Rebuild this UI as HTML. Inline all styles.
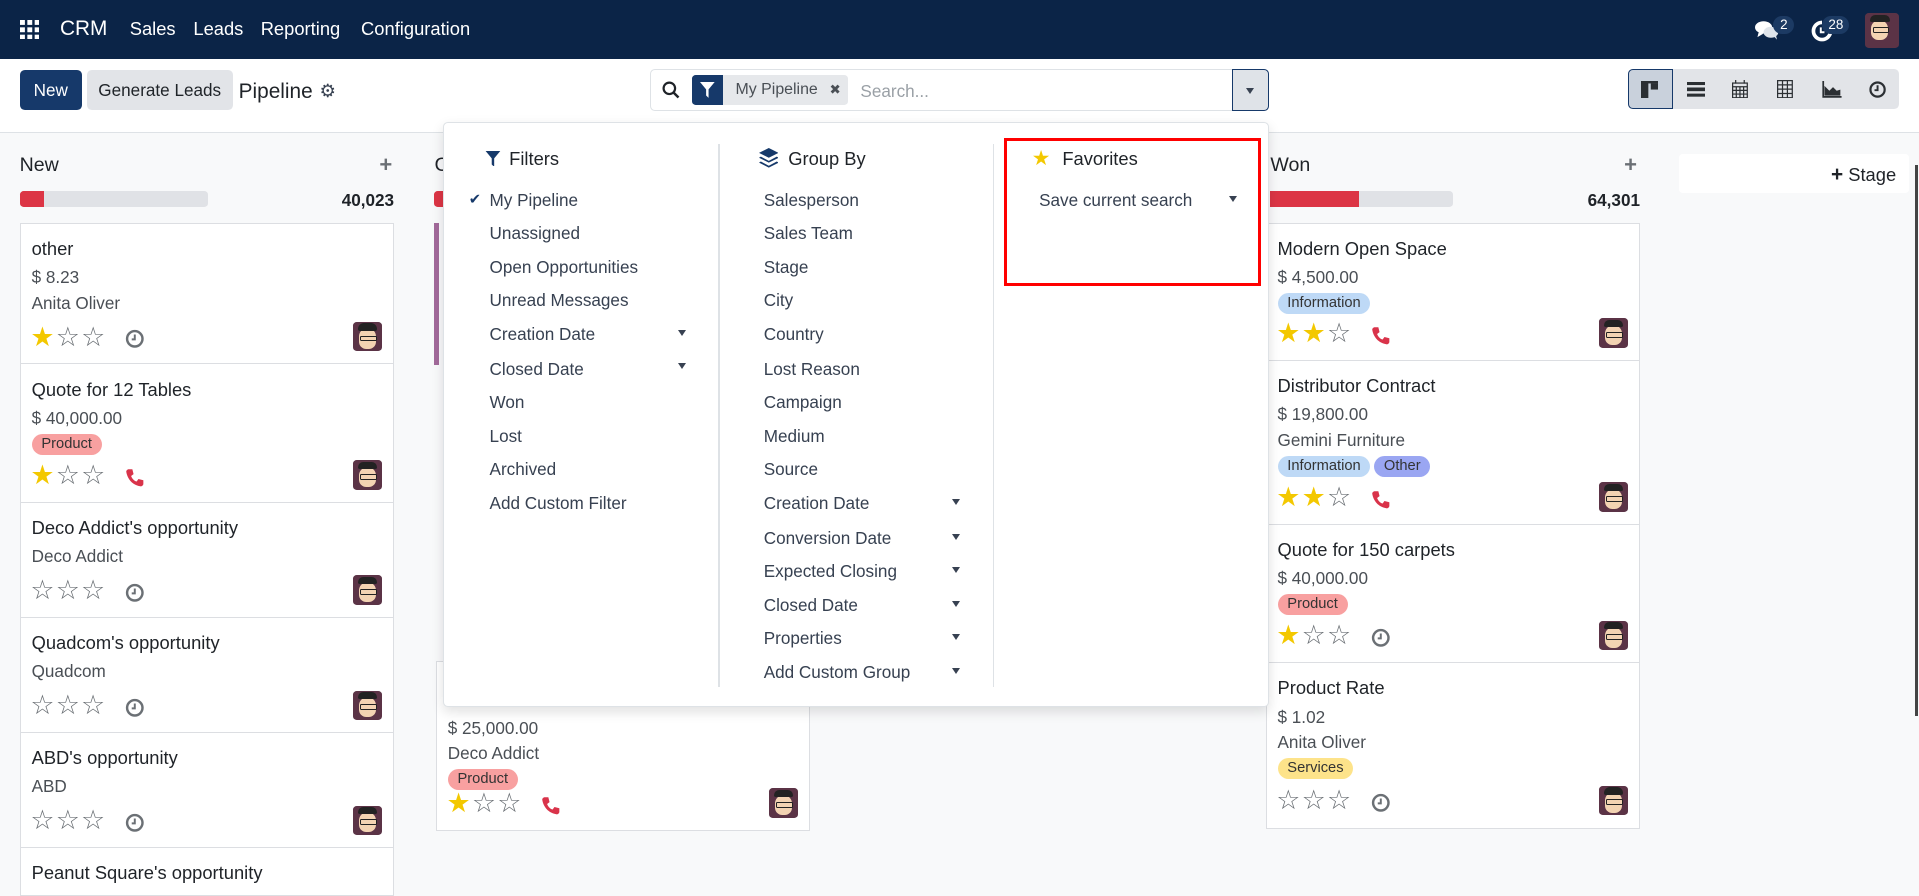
<!DOCTYPE html>
<html><head><meta charset="utf-8">
<style>
html,body{margin:0;padding:0;}
body{width:1568px;height:714px;overflow:hidden;zoom:1.2239;background:#f8f9fa;font-family:"Liberation Sans","DejaVu Sans",sans-serif;color:#374151;position:relative;}
.a{position:absolute;}
.nav{left:0;top:0;width:1568px;height:48px;background:#0b2447;color:#fff;}
.nav span{position:absolute;top:15px;font-size:15px;}
.ctrl{left:0;top:48px;width:1568px;height:60px;background:#fff;border-bottom:1px solid #dee2e6;}
.btn{position:absolute;top:9px;height:33px;line-height:33px;font-size:14px;border-radius:4px;text-align:center;}
.card{position:absolute;background:#fff;border:1px solid #dcdee2;box-sizing:border-box;padding:10px 9px;font-size:14px;color:#4a4f55;}
.card .t{font-size:15px;color:#1f2328;line-height:21px;margin-bottom:3px;}
.card .l{line-height:21px;}
.tag{display:inline-block;height:17px;line-height:17px;padding:0 8px;border-radius:9px;font-size:12px;color:#333;margin-top:1px;margin-right:3px;}
.p{background:#f8a0a0;}.i{background:#bed9f6;}.o{background:#9aa6f2;}.s{background:#fde38a;}
.foot{position:absolute;left:9px;bottom:8px;height:22px;right:9px;}
.st{font-family:"DejaVu Sans",sans-serif;font-size:22px;line-height:22px;color:#6b7075;letter-spacing:1px;position:absolute;left:-1px;top:-2px;}
.st b{color:#f3c800;font-weight:normal;}
.av{position:absolute;right:0;top:-4px;width:24px;height:24px;border-radius:3px;background:#5b3346;overflow:hidden;}
.av:before{content:"";position:absolute;left:5px;top:5px;width:14px;height:17px;border-radius:7px 7px 6px 6px;background:#f3d3b2;}
.av:after{content:"";position:absolute;left:4px;top:1px;width:16px;height:6px;border-radius:6px 6px 2px 2px;background:#222;}
.av i{position:absolute;left:6px;top:11px;width:12px;height:3px;border:1px solid #222;border-radius:1px;z-index:2;}
.ico{position:absolute;top:2px;}
.menu{font-size:14px;color:#374151;white-space:nowrap;}
.menu div{position:absolute;white-space:nowrap;}
.hdr{font-size:15px;color:#1f2328;}
.caret{position:absolute;width:0;height:0;border-left:4px solid transparent;border-right:4px solid transparent;border-top:5px solid #374151;}
</style></head><body>

<div class="a nav">
  <svg class="a" style="left:16px;top:16px" width="16" height="16" viewBox="0 0 16 16" fill="#fff"><rect x="0" y="0" width="4" height="4"/><rect x="6" y="0" width="4" height="4"/><rect x="12" y="0" width="4" height="4"/><rect x="0" y="6" width="4" height="4"/><rect x="6" y="6" width="4" height="4"/><rect x="12" y="6" width="4" height="4"/><rect x="0" y="12" width="4" height="4"/><rect x="6" y="12" width="4" height="4"/><rect x="12" y="12" width="4" height="4"/></svg>
  <span style="left:49px;top:14px;font-size:17px">CRM</span>
  <span style="left:106px">Sales</span>
  <span style="left:158px">Leads</span>
  <span style="left:213px">Reporting</span>
  <span style="left:295px">Configuration</span>
  <svg class="a" style="left:1434px;top:16px" width="20" height="17" viewBox="0 0 20 17" fill="#fff"><ellipse cx="7" cy="6" rx="7" ry="5"/><path d="M3 10 L2 14 L7 11Z"/><ellipse cx="13" cy="10" rx="6" ry="4.5" fill="#dfe4ea"/><path d="M15 13 L18 16 L17 12Z" fill="#dfe4ea"/></svg>
  <div class="a" style="left:1449px;top:13px;width:17px;height:15px;border-radius:8px;background:#1c3a63;font-size:11px;text-align:center;line-height:15px">2</div>
  <svg class="a" style="left:1480px;top:16px" width="18" height="18" viewBox="0 0 18 18"><path d="M9 2 A7 7 0 1 0 16 9" stroke="#fff" stroke-width="3" fill="none"/><path d="M8 6 V10 H11" stroke="#fff" stroke-width="1.6" fill="none"/></svg>
  <div class="a" style="left:1489px;top:13px;width:22px;height:15px;border-radius:8px;background:#1c3a63;font-size:11px;text-align:center;line-height:15px">28</div>
  <div class="av" style="left:1524px;top:11px;width:28px;height:28px;right:auto"><i></i></div>
</div>

<div class="a ctrl">
  <div class="btn" style="left:16px;width:51px;background:#16396a;color:#fff">New</div>
  <div class="btn" style="left:71px;width:119px;background:#e2e4e8;color:#1f2328">Generate Leads</div>
  <div class="a" style="left:195px;top:17px;font-size:17px;color:#1f2328">Pipeline</div>
  <div class="a" style="left:261px;top:18px;font-size:15px;color:#374151;font-family:'DejaVu Sans'">⚙</div>
  <div class="a" style="left:531px;top:8px;width:506px;height:35px;border:1px solid #dee2e6;border-radius:4px;box-sizing:border-box;background:#fff"></div>
  <svg class="a" style="left:541px;top:18px" width="15" height="15" viewBox="0 0 15 15"><circle cx="6" cy="6" r="4.7" stroke="#1f2328" stroke-width="1.8" fill="none"/><path d="M9.5 9.5 L13.5 13.5" stroke="#1f2328" stroke-width="2"/></svg>
  <div class="a" style="left:565px;top:13px;width:26px;height:25px;background:#16396a;border-radius:3px 0 0 3px"></div>
  <svg class="a" style="left:572px;top:19px" width="12" height="13" viewBox="0 0 12 13"><path d="M0 0 H12 L7 6 V13 L5 11 V6Z" fill="#fff"/></svg>
  <div class="a" style="left:591px;top:13px;width:102px;height:25px;background:#e6e8eb;border-radius:0 3px 3px 0;font-size:13px;line-height:25px;color:#4a4f55;padding-left:10px;box-sizing:border-box;white-space:nowrap">My Pipeline <span style="margin-left:6px;font-size:11px">✖</span></div>
  <div class="a" style="left:703px;top:18px;font-size:14px;color:#9aa0a6">Search...</div>
  <div class="a" style="left:1007px;top:8px;width:30px;height:35px;background:#dfe3e8;border:1px solid #16396a;border-radius:0 4px 4px 0;box-sizing:border-box"></div>
  <div class="caret" style="left:1018px;top:24px"></div>
  <div class="a" style="left:1330px;top:8px;width:222px;height:33px;background:#e2e4e8;border-radius:4px"></div>
  <div class="a" style="left:1330px;top:8px;width:37px;height:33px;background:#c9d1dc;border:1px solid #16396a;border-radius:4px 0 0 4px;box-sizing:border-box"></div>
  <svg class="a" style="left:1341px;top:18px" width="14" height="14" viewBox="0 0 14 14" fill="#2b2f33"><rect x="0" y="0" width="6" height="14"/><rect x="8" y="2" width="6" height="5"/><rect x="0" y="0" width="14" height="2"/></svg>
  <svg class="a" style="left:1378px;top:19px" width="15" height="12" viewBox="0 0 15 12" fill="#2b2f33"><rect y="0" width="15" height="2.5"/><rect y="4.5" width="15" height="3"/><rect y="9.5" width="15" height="2.5"/></svg>
  <svg class="a" style="left:1415px;top:17px" width="13" height="15" viewBox="0 0 13 15" fill="none" stroke="#2b2f33"><rect x="0.5" y="2.5" width="12" height="12"/><path d="M0.5 5.5 H12.5 M0.5 8.5 H12.5 M0.5 11.5 H12.5 M3.5 5 V15 M6.5 5 V15 M9.5 5 V15 M3 0 V3 M10 0 V3" /></svg>
  <svg class="a" style="left:1452px;top:17px" width="13" height="15" viewBox="0 0 13 15" fill="none" stroke="#2b2f33"><rect x="0.5" y="0.5" width="12" height="14"/><path d="M0.5 4 H12.5 M0.5 7.5 H12.5 M0.5 11 H12.5 M4.5 0 V15 M8.5 0 V15"/></svg>
  <svg class="a" style="left:1489px;top:18px" width="16" height="14" viewBox="0 0 16 14"><path d="M1 0 V13 H16" stroke="#2b2f33" fill="none" stroke-width="1.4"/><path d="M2 12 V4 L6 8 L9 5 L12 8 L15 7 V12Z" fill="#2b2f33"/></svg>
  <svg class="a" style="left:1527px;top:18px" width="14" height="14" viewBox="0 0 14 14"><circle cx="7" cy="7" r="5.8" stroke="#2b2f33" stroke-width="1.8" fill="none"/><path d="M7 3.5 V7.5 H4.5" stroke="#2b2f33" stroke-width="1.6" fill="none"/></svg>
</div>

<!-- Column New -->
<div class="a" style="left:16px;top:126px;font-size:16px;color:#1f2328">New</div>
<div class="a" style="left:310px;top:124px;font-size:18px;color:#6b7075;font-weight:bold">+</div>
<div class="a" style="left:16px;top:156px;width:154px;height:13px;background:#e0e2e6;border-radius:3px"></div>
<div class="a" style="left:16px;top:156px;width:20px;height:13px;background:#dc3545;border-radius:3px 0 0 3px"></div>
<div class="a" style="left:250px;top:155px;width:72px;text-align:right;font-size:14px;font-weight:bold;color:#1f2328">40,023</div>

<div class="card" style="left:16px;top:182px;width:306px;height:116px"><div class="t">other</div><div class="l">$ 8.23</div><div class="l">Anita Oliver</div>
<div class="foot"><span class="st"><b>★</b>☆☆</span><svg class="ico" style="left:76px" width="16" height="16" viewBox="0 0 16 16"><circle cx="8" cy="8" r="6.3" stroke="#6b7075" stroke-width="2" fill="none"/><path d="M8 4.5 V8.5 H5.5" stroke="#6b7075" stroke-width="1.6" fill="none"/></svg><div class="av"><i></i></div></div></div>

<div class="card" style="left:16px;top:297px;width:306px;height:114px"><div class="t">Quote for 12 Tables</div><div class="l">$ 40,000.00</div><span class="tag p">Product</span>
<div class="foot"><span class="st"><b>★</b>☆☆</span><svg class="ico" style="left:76px" width="16" height="16" viewBox="0 0 16 16"><path d="M3 1 L6 1 L7 5 L5 6.5 C6 9 7.5 10.5 9.5 11 L11 9 L15 10 L15 13 C15 14 14 15 13 15 C6 14 2 9 1 3 C1 2 2 1 3 1Z" fill="#d9334a"/></svg><div class="av"><i></i></div></div></div>

<div class="card" style="left:16px;top:410px;width:306px;height:95px"><div class="t">Deco Addict's opportunity</div><div class="l">Deco Addict</div>
<div class="foot"><span class="st">☆☆☆</span><svg class="ico" style="left:76px" width="16" height="16" viewBox="0 0 16 16"><circle cx="8" cy="8" r="6.3" stroke="#6b7075" stroke-width="2" fill="none"/><path d="M8 4.5 V8.5 H5.5" stroke="#6b7075" stroke-width="1.6" fill="none"/></svg><div class="av"><i></i></div></div></div>

<div class="card" style="left:16px;top:504px;width:306px;height:95px"><div class="t">Quadcom's opportunity</div><div class="l">Quadcom</div>
<div class="foot"><span class="st">☆☆☆</span><svg class="ico" style="left:76px" width="16" height="16" viewBox="0 0 16 16"><circle cx="8" cy="8" r="6.3" stroke="#6b7075" stroke-width="2" fill="none"/><path d="M8 4.5 V8.5 H5.5" stroke="#6b7075" stroke-width="1.6" fill="none"/></svg><div class="av"><i></i></div></div></div>

<div class="card" style="left:16px;top:598px;width:306px;height:95px"><div class="t">ABD's opportunity</div><div class="l">ABD</div>
<div class="foot"><span class="st">☆☆☆</span><svg class="ico" style="left:76px" width="16" height="16" viewBox="0 0 16 16"><circle cx="8" cy="8" r="6.3" stroke="#6b7075" stroke-width="2" fill="none"/><path d="M8 4.5 V8.5 H5.5" stroke="#6b7075" stroke-width="1.6" fill="none"/></svg><div class="av"><i></i></div></div></div>

<div class="card" style="left:16px;top:692px;width:306px;height:40px"><div class="t">Peanut Square's opportunity</div></div>

<!-- Column 2 (behind dropdown) -->
<div class="a" style="left:355px;top:126px;font-size:16px;color:#1f2328">C</div>
<div class="a" style="left:355px;top:156px;width:20px;height:13px;background:#dc3545;border-radius:3px"></div>
<div class="a" style="left:355px;top:182px;width:4px;height:116px;background:#a26a9a"></div>
<div class="card" style="left:356px;top:540px;width:306px;height:139px;padding-top:44px"><div class="l">$ 25,000.00</div><div class="l">Deco Addict</div><span class="tag p">Product</span>
<div class="foot"><span class="st"><b>★</b>☆☆</span><svg class="ico" style="left:76px" width="16" height="16" viewBox="0 0 16 16"><path d="M3 1 L6 1 L7 5 L5 6.5 C6 9 7.5 10.5 9.5 11 L11 9 L15 10 L15 13 C15 14 14 15 13 15 C6 14 2 9 1 3 C1 2 2 1 3 1Z" fill="#d9334a"/></svg><div class="av"><i></i></div></div></div>

<!-- Won column -->
<div class="a" style="left:1038px;top:126px;font-size:16px;color:#1f2328">Won</div>
<div class="a" style="left:1327px;top:124px;font-size:18px;color:#6b7075;font-weight:bold">+</div>
<div class="a" style="left:1038px;top:156px;width:149px;height:13px;background:#e0e2e6;border-radius:3px"></div>
<div class="a" style="left:1038px;top:156px;width:72px;height:13px;background:#dc3545"></div>
<div class="a" style="left:1260px;top:155px;width:80px;text-align:right;font-size:14px;font-weight:bold;color:#1f2328">64,301</div>

<div class="card" style="left:1034px;top:182px;width:306px;height:113px"><div class="t">Modern Open Space</div><div class="l">$ 4,500.00</div><span class="tag i">Information</span>
<div class="foot"><span class="st"><b>★★</b>☆</span><svg class="ico" style="left:76px" width="16" height="16" viewBox="0 0 16 16"><path d="M3 1 L6 1 L7 5 L5 6.5 C6 9 7.5 10.5 9.5 11 L11 9 L15 10 L15 13 C15 14 14 15 13 15 C6 14 2 9 1 3 C1 2 2 1 3 1Z" fill="#d9334a"/></svg><div class="av"><i></i></div></div></div>

<div class="card" style="left:1034px;top:294px;width:306px;height:135px"><div class="t">Distributor Contract</div><div class="l">$ 19,800.00</div><div class="l">Gemini Furniture</div><span class="tag i">Information</span><span class="tag o">Other</span>
<div class="foot"><span class="st"><b>★★</b>☆</span><svg class="ico" style="left:76px" width="16" height="16" viewBox="0 0 16 16"><path d="M3 1 L6 1 L7 5 L5 6.5 C6 9 7.5 10.5 9.5 11 L11 9 L15 10 L15 13 C15 14 14 15 13 15 C6 14 2 9 1 3 C1 2 2 1 3 1Z" fill="#d9334a"/></svg><div class="av"><i></i></div></div></div>

<div class="card" style="left:1034px;top:428px;width:306px;height:114px"><div class="t">Quote for 150 carpets</div><div class="l">$ 40,000.00</div><span class="tag p">Product</span>
<div class="foot"><span class="st"><b>★</b>☆☆</span><svg class="ico" style="left:76px" width="16" height="16" viewBox="0 0 16 16"><circle cx="8" cy="8" r="6.3" stroke="#6b7075" stroke-width="2" fill="none"/><path d="M8 4.5 V8.5 H5.5" stroke="#6b7075" stroke-width="1.6" fill="none"/></svg><div class="av"><i></i></div></div></div>

<div class="card" style="left:1034px;top:541px;width:306px;height:136px"><div class="t">Product Rate</div><div class="l">$ 1.02</div><div class="l">Anita Oliver</div><span class="tag s">Services</span>
<div class="foot"><span class="st">☆☆☆</span><svg class="ico" style="left:76px" width="16" height="16" viewBox="0 0 16 16"><circle cx="8" cy="8" r="6.3" stroke="#6b7075" stroke-width="2" fill="none"/><path d="M8 4.5 V8.5 H5.5" stroke="#6b7075" stroke-width="1.6" fill="none"/></svg><div class="av"><i></i></div></div></div>

<div class="a" style="left:1372px;top:126px;width:188px;height:32px;background:#fff;border-radius:3px"></div>
<div class="a" style="left:1496px;top:133px;font-size:15px;color:#1f2328;white-space:nowrap"><b style="font-size:17px">+</b> Stage</div>
<div class="a" style="left:1565px;top:135px;width:2px;height:450px;background:#444"></div>

<!-- Dropdown -->
<div class="a" style="left:362px;top:100px;width:675px;height:478px;background:#fff;border:1px solid #dee2e6;border-radius:4px;box-sizing:border-box;box-shadow:0 4px 10px rgba(0,0,0,.12)"></div>
<div class="a" style="left:587px;top:118px;width:1px;height:443px;background:#dee2e6"></div>
<div class="a" style="left:811px;top:118px;width:1px;height:443px;background:#dee2e6"></div>
<div class="a menu" style="left:0;top:0;width:1100px;height:600px">
  <svg style="position:absolute;left:396px;top:123px" width="13" height="13" viewBox="0 0 12 13"><path d="M0 0 H12 L7 6 V13 L5 11 V6Z" fill="#16396a"/></svg>
  <div class="hdr" style="left:416px;top:121px">Filters</div>
  <div style="left:383px;top:156px;font-size:12px;color:#16396a">✔</div>
  <div style="left:400px;top:155px">My Pipeline</div>
  <div style="left:400px;top:182px">Unassigned</div>
  <div style="left:400px;top:210px">Open Opportunities</div>
  <div style="left:400px;top:237px">Unread Messages</div>
  <div style="left:400px;top:265px">Creation Date</div><div class="caret" style="left:554px;top:270px"></div>
  <div style="left:400px;top:293px">Closed Date</div><div class="caret" style="left:554px;top:297px"></div>
  <div style="left:400px;top:320px">Won</div>
  <div style="left:400px;top:348px">Lost</div>
  <div style="left:400px;top:375px">Archived</div>
  <div style="left:400px;top:403px">Add Custom Filter</div>

  <svg style="position:absolute;left:620px;top:121px" width="16" height="16" viewBox="0 0 16 16" fill="#16396a"><path d="M8 0 L16 4 L8 8 L0 4Z"/><path d="M1.5 7 L8 10.5 L14.5 7 L16 8 L8 12 L0 8Z"/><path d="M1.5 11 L8 14.5 L14.5 11 L16 12 L8 16 L0 12Z"/></svg>
  <div class="hdr" style="left:644px;top:121px">Group By</div>
  <div style="left:624px;top:155px">Salesperson</div>
  <div style="left:624px;top:182px">Sales Team</div>
  <div style="left:624px;top:210px">Stage</div>
  <div style="left:624px;top:237px">City</div>
  <div style="left:624px;top:265px">Country</div>
  <div style="left:624px;top:293px">Lost Reason</div>
  <div style="left:624px;top:320px">Campaign</div>
  <div style="left:624px;top:348px">Medium</div>
  <div style="left:624px;top:375px">Source</div>
  <div style="left:624px;top:403px">Creation Date</div><div class="caret" style="left:778px;top:408px"></div>
  <div style="left:624px;top:431px">Conversion Date</div><div class="caret" style="left:778px;top:436px"></div>
  <div style="left:624px;top:458px">Expected Closing</div><div class="caret" style="left:778px;top:463px"></div>
  <div style="left:624px;top:486px">Closed Date</div><div class="caret" style="left:778px;top:491px"></div>
  <div style="left:624px;top:513px">Properties</div><div class="caret" style="left:778px;top:518px"></div>
  <div style="left:624px;top:541px">Add Custom Group</div><div class="caret" style="left:778px;top:546px"></div>

  <div style="left:843px;top:119px;font-family:'DejaVu Sans';font-size:17px;color:#f3c800">★</div>
  <div class="hdr" style="left:868px;top:121px">Favorites</div>
  <div style="left:849px;top:155px">Save current search</div><div class="caret" style="left:1004px;top:160px"></div>
</div>
<div class="a" style="left:820px;top:113px;width:210px;height:121px;border:3px solid #ff0000;box-sizing:border-box"></div>
</body></html>
